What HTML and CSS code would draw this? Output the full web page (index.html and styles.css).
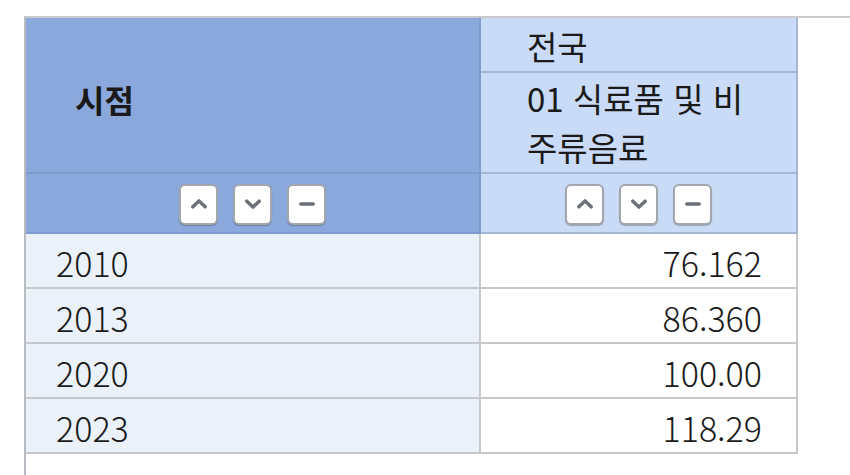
FILE: index.html
```html
<!DOCTYPE html>
<html lang="ko">
<head>
<meta charset="utf-8">
<link rel="stylesheet" href="styles.css">
</head>
<body>
<div class="frame">
  <table class="grid">
    <colgroup><col class="c-time"><col class="c-val"></colgroup>
    <thead>
      <tr class="h1">
        <th class="head-left" rowspan="2">시점</th>
        <th class="head-right">전국</th>
      </tr>
      <tr class="h2">
        <th class="head-right item">01 식료품 및 비주류음료</th>
      </tr>
      <tr class="h3">
        <th class="head-left tools">
          <div class="btns">
            <span class="btn"><svg viewBox="0 0 16 16"><path d="M3.5 10 L8 5.8 L12.5 10"/></svg></span>
            <span class="btn"><svg viewBox="0 0 16 16"><path d="M3.5 6 L8 10.2 L12.5 6"/></svg></span>
            <span class="btn"><svg viewBox="0 0 16 16"><path d="M3.5 8 H12.5"/></svg></span>
          </div>
        </th>
        <th class="head-right tools">
          <div class="btns">
            <span class="btn"><svg viewBox="0 0 16 16"><path d="M3.5 10 L8 5.8 L12.5 10"/></svg></span>
            <span class="btn"><svg viewBox="0 0 16 16"><path d="M3.5 6 L8 10.2 L12.5 6"/></svg></span>
            <span class="btn"><svg viewBox="0 0 16 16"><path d="M3.5 8 H12.5"/></svg></span>
          </div>
        </th>
      </tr>
    </thead>
    <tbody>
      <tr><td class="year">2010</td><td class="num">76.162</td></tr>
      <tr><td class="year">2013</td><td class="num">86.360</td></tr>
      <tr><td class="year">2020</td><td class="num">100.00</td></tr>
      <tr><td class="year">2023</td><td class="num">118.29</td></tr>
    </tbody>
  </table>
</div>
</body>
</html>
```

FILE: styles.css
```css
html, body {
  margin: 0;
  padding: 0;
  background: #ffffff;
}
body {
  font-family: "Noto Sans CJK KR", "Noto Sans", sans-serif;
  color: #1a1a1a;
  padding: 16px 0 0 24px;
  height: 475px;
  box-sizing: border-box;
  overflow: hidden;
}
.frame {
  border-top: 2px solid #c8cacd;
  border-left: 2px solid #b8bcc2;
  height: 100%;
}
.grid {
  border-collapse: collapse;
  width: 771px;
  table-layout: fixed;
}
.c-time { width: 454px; }
.c-val { width: 317px; }
th, td {
  padding: 0;
  font-weight: 400;
  font-size: 33px;
  border: 2px solid #c4c7cc;
}
.grid thead th { border-top: none; }
.grid tr > :first-child { border-left: none; }
.head-left {
  background: #8aa8dc;
  border-color: #7f9ccf;
}
.head-right {
  background: #c9dbf6;
  border-color: #a4b6d3;
  text-align: left;
}
th.head-left[rowspan] {
  font-weight: 700;
  font-size: 32px;
  text-align: left;
  padding-left: 49px;
  padding-top: 8px;
}
.h1 .head-right {
  height: 50px;
  padding-left: 46px;
  line-height: 48px;
  padding-top: 3px;
}
.item {
  height: 97px;
  padding: 1px 34px 0 46px;
  line-height: 49px;
  font-weight: 400;
}
.h3 th { height: 58px; }
.head-right, .item { border-right: 2px solid #a4b6d3; }
.btns {
  display: flex;
  justify-content: center;
  gap: 15px;
  padding-top: 2px;
}
.btn {
  width: 35px;
  height: 37px;
  flex: none;
  background: #ffffff;
  border: 2px solid #a2a6ad;
  border-radius: 6px;
  box-shadow: 0 1px 1px rgba(0,0,0,0.25);
  display: flex;
  align-items: center;
  justify-content: center;
}
.btn svg {
  width: 22px;
  height: 22px;
  fill: none;
  stroke: #6c7078;
  stroke-width: 2.6;
  stroke-linecap: round;
  stroke-linejoin: round;
}
tbody td {
  height: 48px;
  font-size: 34px;
  font-weight: 300;
  line-height: 40px;
  padding-top: 5px;
  border-color: #c6c8cc;
}
.year {
  background: #eaf1f9;
  padding-left: 30px;
}
.num {
  background: #ffffff;
  text-align: right;
  padding-right: 34px;
}
```
